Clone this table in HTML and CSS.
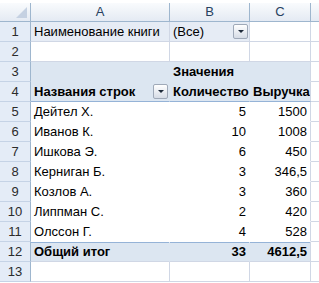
FILE: index.html
```html
<!DOCTYPE html>
<html lang="ru">
<head>
<meta charset="utf-8">
<link rel="stylesheet" href="styles.css">
</head>
<body>
<div class="sheet">
  <div class="ch corner"><span class="tri"></span></div>
  <div class="ch">A</div>
  <div class="ch">B</div>
  <div class="ch">C</div>
  <div class="ch edge"></div>

  <div class="rh">1</div>
  <div class="c pf">Наименование книги</div>
  <div class="c pf filt"><span>(Все)</span><span class="dd"></span></div>
  <div class="c"></div>
  <div class="c edge"></div>

  <div class="rh">2</div>
  <div class="c"></div>
  <div class="c"></div>
  <div class="c"></div>
  <div class="c edge"></div>

  <div class="rh">3</div>
  <div class="c hd"></div>
  <div class="c hd b">Значения</div>
  <div class="c hd last"></div>
  <div class="c edge"></div>

  <div class="rh">4</div>
  <div class="c hd hb b filt"><span>Названия строк</span><span class="dd"></span></div>
  <div class="c hd hb b">Количество</div>
  <div class="c hd hb b last">Выручка</div>
  <div class="c edge"></div>

  <div class="rh">5</div>
  <div class="c pv">Дейтел Х.</div>
  <div class="c pv r">5</div>
  <div class="c pv r last">1500</div>
  <div class="c edge"></div>

  <div class="rh">6</div>
  <div class="c pv">Иванов К.</div>
  <div class="c pv r">10</div>
  <div class="c pv r last">1008</div>
  <div class="c edge"></div>

  <div class="rh">7</div>
  <div class="c pv">Ишкова Э.</div>
  <div class="c pv r">6</div>
  <div class="c pv r last">450</div>
  <div class="c edge"></div>

  <div class="rh">8</div>
  <div class="c pv">Керниган Б.</div>
  <div class="c pv r">3</div>
  <div class="c pv r last">346,5</div>
  <div class="c edge"></div>

  <div class="rh">9</div>
  <div class="c pv">Козлов А.</div>
  <div class="c pv r">3</div>
  <div class="c pv r last">360</div>
  <div class="c edge"></div>

  <div class="rh">10</div>
  <div class="c pv">Липпман С.</div>
  <div class="c pv r">2</div>
  <div class="c pv r last">420</div>
  <div class="c edge"></div>

  <div class="rh">11</div>
  <div class="c pv">Олссон Г.</div>
  <div class="c pv r">4</div>
  <div class="c pv r last">528</div>
  <div class="c edge"></div>

  <div class="rh">12</div>
  <div class="c tot b">Общий итог</div>
  <div class="c tot b r">33</div>
  <div class="c tot b r last">4612,5</div>
  <div class="c edge"></div>

  <div class="rh">13</div>
  <div class="c"></div>
  <div class="c"></div>
  <div class="c"></div>
  <div class="c edge"></div>
</div>
</body>
</html>
```
FILE: styles.css
```css
html, body {
  margin: 0;
  padding: 0;
  background: #ffffff;
}
body {
  padding-top: 3px;
  font-family: "Liberation Sans", Arial, sans-serif;
  font-size: 13px;
  color: #000;
}
.sheet {
  display: grid;
  grid-template-columns: 31px 139px 80px 61px 8px;
  grid-template-rows: 19px repeat(13, 20px);
  width: 319px;
}
.sheet > div {
  box-sizing: border-box;
  white-space: nowrap;
  overflow: hidden;
}
.ch {
  background: linear-gradient(#f9fbfd, #e4eaf3);
  border-right: 1px solid #9eb6ce;
  border-bottom: 1px solid #9eb6ce;
  color: #27415f;
  text-align: center;
  line-height: 18px;
  font-size: 13px;
}
.ch.edge { border-right: none; }
.corner { position: relative; }
.tri {
  position: absolute;
  right: 3px;
  bottom: 3px;
  width: 0;
  height: 0;
  border-left: 11px solid transparent;
  border-bottom: 11px solid #c5d1e2;
}
.rh {
  background: #e4ecf7;
  border-right: 1px solid #9eb6ce;
  border-bottom: 1px solid #c5d3e6;
  color: #2b2b2b;
  text-align: center;
  line-height: 19px;
  font-size: 13px;
}
.c {
  border-right: 1px solid #d0d7e5;
  border-bottom: 1px solid #d0d7e5;
  padding: 0 3px;
  line-height: 19px;
}
.c.edge { border-right: none; padding: 0; }
.pf { background: #e6ecf5; }
.hd { background: #dce6f1; border-right-color: #dce6f1; border-bottom-color: #dce6f1; }
.hd.last { border-right-color: #d0d7e5; }
.hd.hb { border-bottom-color: #95b3d7; }
.pv { background: #fff; border-right-color: #fff; border-bottom-color: #fff; }
.pv.last { border-right-color: #d0d7e5; }
.tot {
  background: #dce6f1;
  border-right-color: #dce6f1;
  border-bottom-color: #d0d7e5;
  box-shadow: inset 0 1px 0 #95b3d7;
}
.tot.last { border-right-color: #d0d7e5; }
.b { font-weight: bold; }
.r { text-align: right; padding-right: 3px; }
.filt {
  display: flex;
  align-items: center;
  justify-content: space-between;
  padding-right: 1px;
}
.dd {
  width: 15px;
  height: 15px;
  box-sizing: border-box;
  border: 1px solid #9fa9b8;
  border-radius: 2px;
  background: linear-gradient(#ffffff, #d6dce6);
  position: relative;
  flex: none;
}
.dd::after {
  content: "";
  position: absolute;
  left: 4px;
  top: 5px;
  border-left: 3px solid transparent;
  border-right: 3px solid transparent;
  border-top: 3px solid #1e2a3a;
}
```
